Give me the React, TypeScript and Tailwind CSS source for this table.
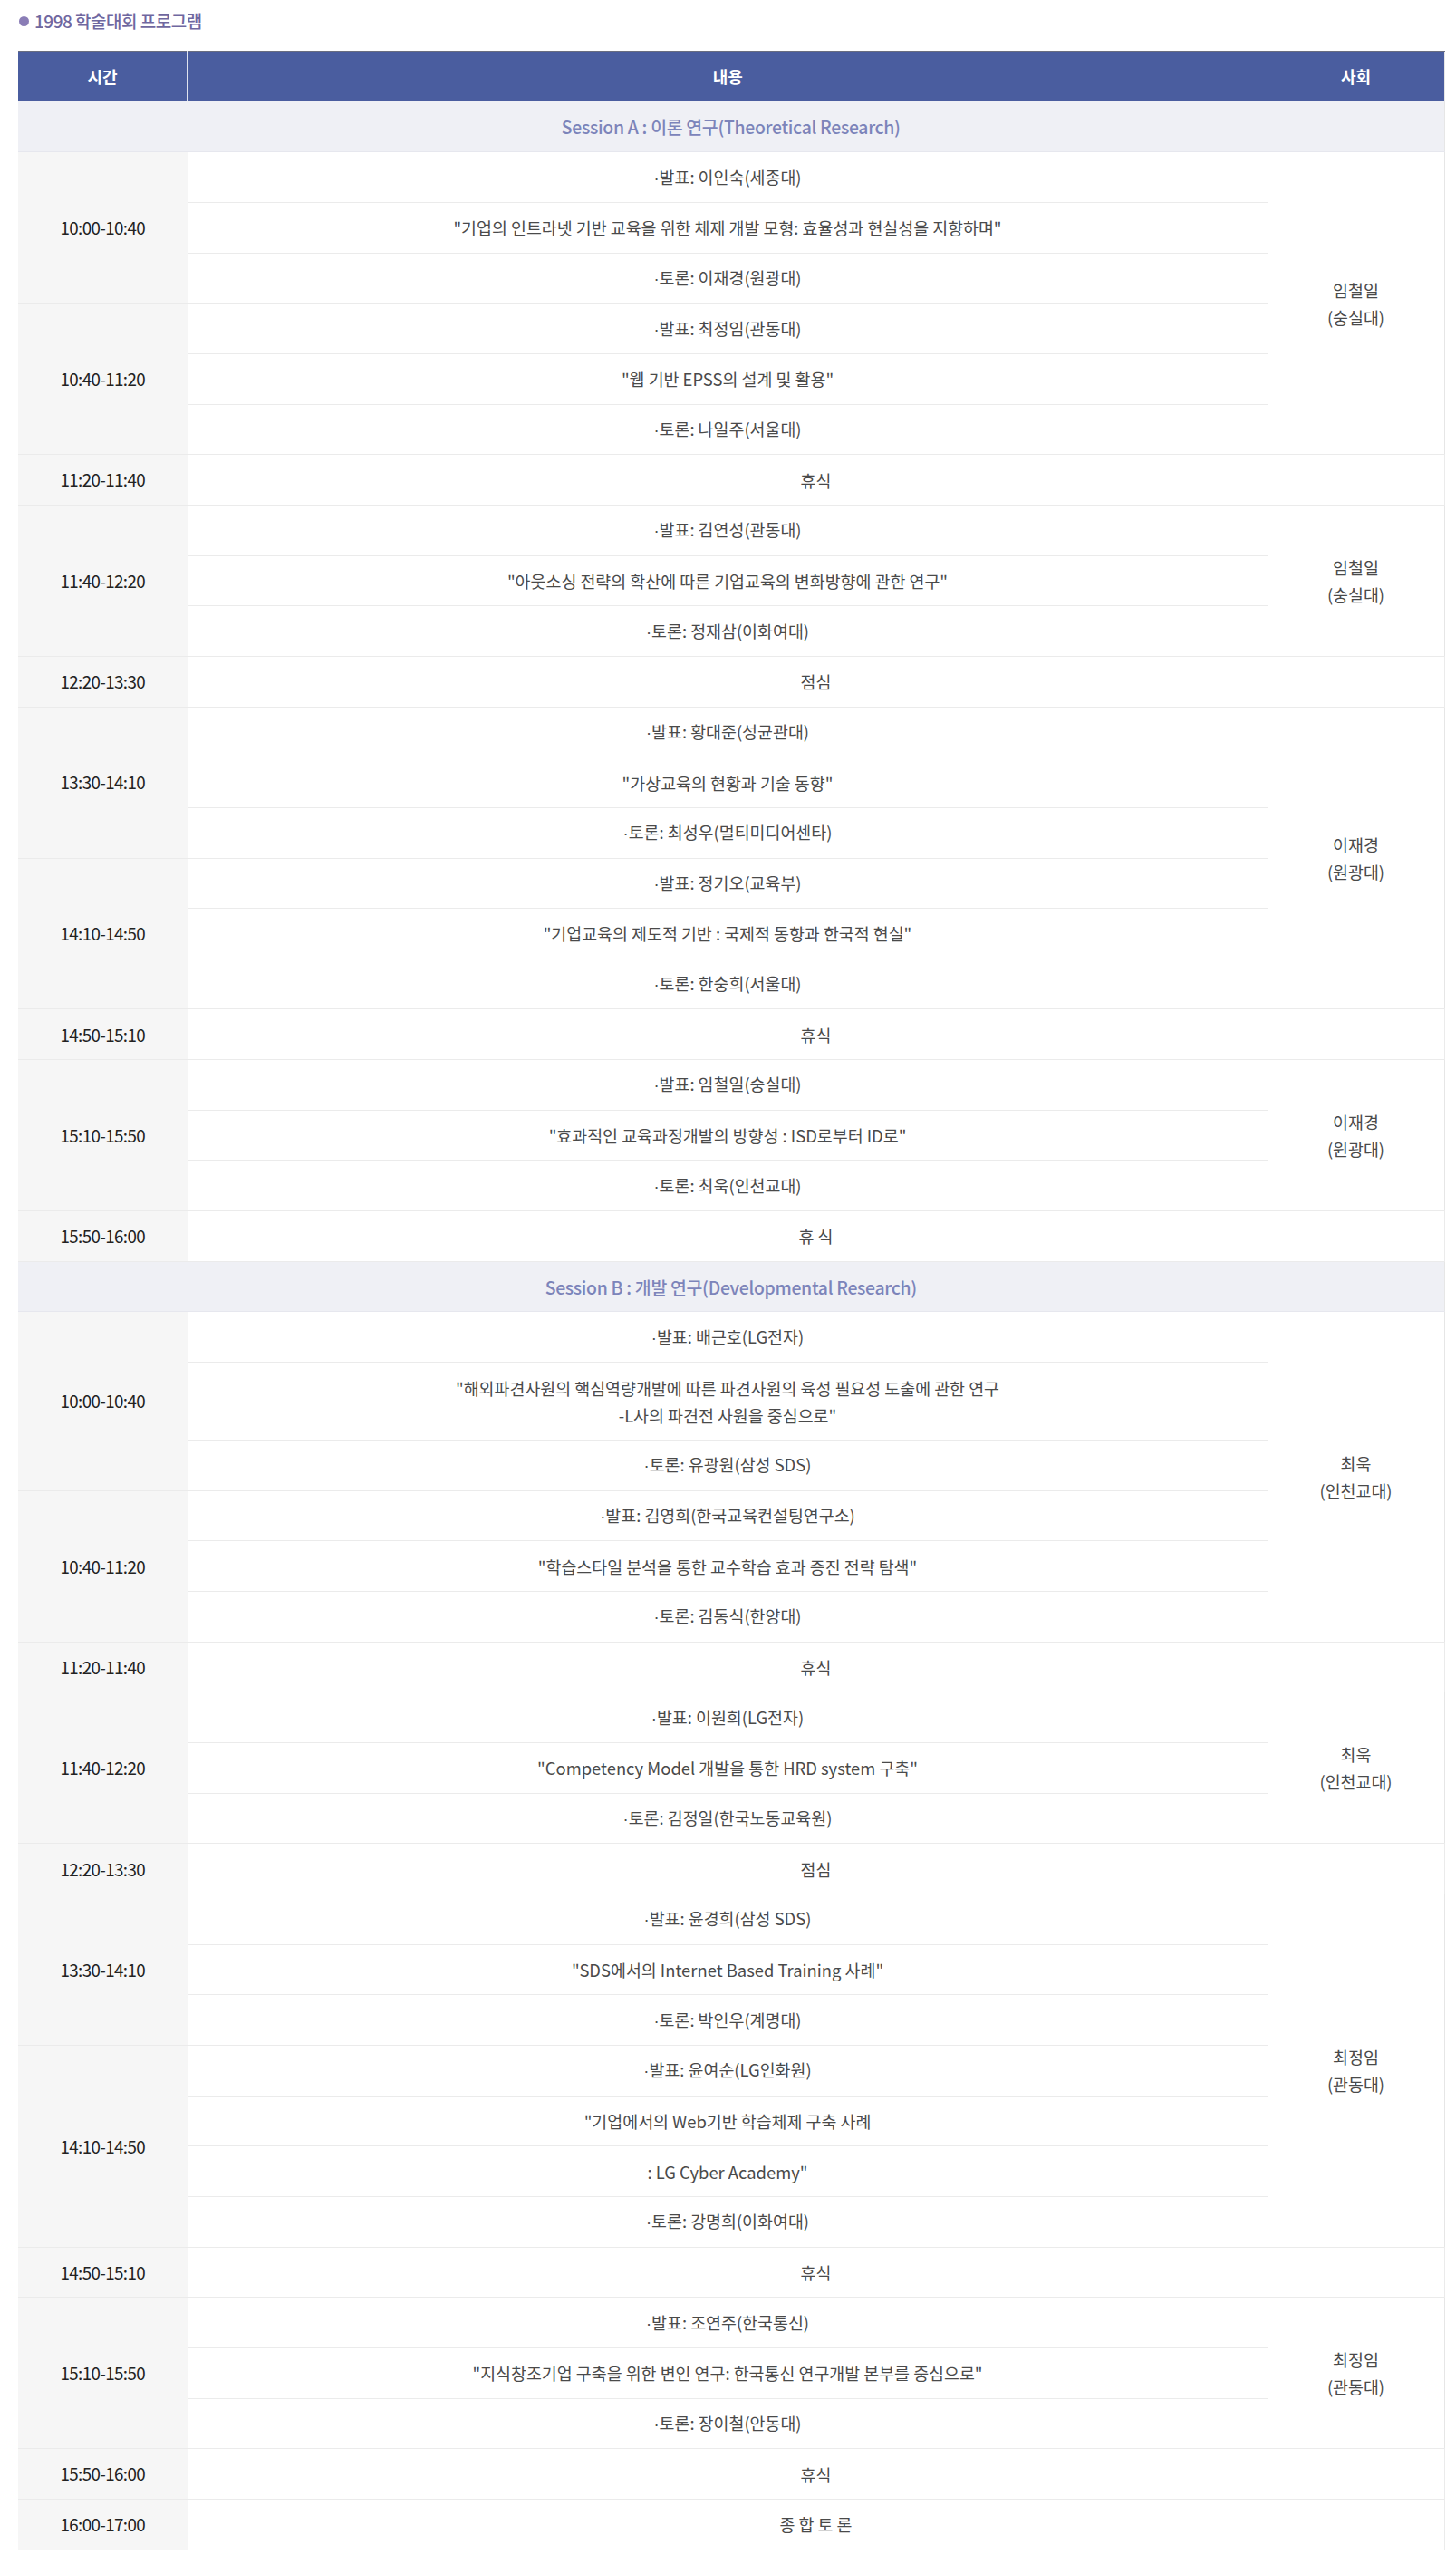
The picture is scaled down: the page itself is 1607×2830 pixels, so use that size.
import React from "react";

type Block =
  | { time: string; lines: string[][]; chair?: [string, string, number] }
  | { time: string; brk: string };

type Session = { title: string; blocks: Block[] };

const sessions: Session[] = [
  {
    title: "Session A : 이론 연구(Theoretical Research)",
    blocks: [
      {
        time: "10:00-10:40",
        lines: [["·발표: 이인숙(세종대)"], ["\"기업의 인트라넷 기반 교육을 위한 체제 개발 모형: 효율성과 현실성을 지향하며\""], ["·토론: 이재경(원광대)"]],
        chair: ["임철일", "(숭실대)", 6],
      },
      {
        time: "10:40-11:20",
        lines: [["·발표: 최정임(관동대)"], ["\"웹 기반 EPSS의 설계 및 활용\""], ["·토론: 나일주(서울대)"]],
      },
      { time: "11:20-11:40", brk: "휴식" },
      {
        time: "11:40-12:20",
        lines: [["·발표: 김연성(관동대)"], ["\"아웃소싱 전략의 확산에 따른 기업교육의 변화방향에 관한 연구\""], ["·토론: 정재삼(이화여대)"]],
        chair: ["임철일", "(숭실대)", 3],
      },
      { time: "12:20-13:30", brk: "점심" },
      {
        time: "13:30-14:10",
        lines: [["·발표: 황대준(성균관대)"], ["\"가상교육의 현황과 기술 동향\""], ["·토론: 최성우(멀티미디어센타)"]],
        chair: ["이재경", "(원광대)", 6],
      },
      {
        time: "14:10-14:50",
        lines: [["·발표: 정기오(교육부)"], ["\"기업교육의 제도적 기반 : 국제적 동향과 한국적 현실\""], ["·토론: 한숭희(서울대)"]],
      },
      { time: "14:50-15:10", brk: "휴식" },
      {
        time: "15:10-15:50",
        lines: [["·발표: 임철일(숭실대)"], ["\"효과적인 교육과정개발의 방향성 : ISD로부터 ID로\""], ["·토론: 최욱(인천교대)"]],
        chair: ["이재경", "(원광대)", 3],
      },
      { time: "15:50-16:00", brk: "휴 식" },
    ],
  },
  {
    title: "Session B : 개발 연구(Developmental Research)",
    blocks: [
      {
        time: "10:00-10:40",
        lines: [
          ["·발표: 배근호(LG전자)"],
          ["\"해외파견사원의 핵심역량개발에 따른 파견사원의 육성 필요성 도출에 관한 연구", "-L사의 파견전 사원을 중심으로\""],
          ["·토론: 유광원(삼성 SDS)"],
        ],
        chair: ["최욱", "(인천교대)", 6],
      },
      {
        time: "10:40-11:20",
        lines: [["·발표: 김영희(한국교육컨설팅연구소)"], ["\"학습스타일 분석을 통한 교수학습 효과 증진 전략 탐색\""], ["·토론: 김동식(한양대)"]],
      },
      { time: "11:20-11:40", brk: "휴식" },
      {
        time: "11:40-12:20",
        lines: [["·발표: 이원희(LG전자)"], ["\"Competency Model 개발을 통한 HRD system 구축\""], ["·토론: 김정일(한국노동교육원)"]],
        chair: ["최욱", "(인천교대)", 3],
      },
      { time: "12:20-13:30", brk: "점심" },
      {
        time: "13:30-14:10",
        lines: [["·발표: 윤경희(삼성 SDS)"], ["\"SDS에서의 Internet Based Training 사례\""], ["·토론: 박인우(계명대)"]],
        chair: ["최정임", "(관동대)", 7],
      },
      {
        time: "14:10-14:50",
        lines: [["·발표: 윤여순(LG인화원)"], ["\"기업에서의 Web기반 학습체제 구축 사례"], [": LG Cyber Academy\""], ["·토론: 강명희(이화여대)"]],
      },
      { time: "14:50-15:10", brk: "휴식" },
      {
        time: "15:10-15:50",
        lines: [["·발표: 조연주(한국통신)"], ["\"지식창조기업 구축을 위한 변인 연구: 한국통신 연구개발 본부를 중심으로\""], ["·토론: 장이철(안동대)"]],
        chair: ["최정임", "(관동대)", 3],
      },
      { time: "15:50-16:00", brk: "휴식" },
      { time: "16:00-17:00", brk: "종 합 토 론" },
    ],
  },
];

const timeCls =
  "bg-[#f6f6f6] border-r border-b border-[#ebebeb] text-center align-middle text-[#222] text-[18.8px] tracking-[-0.6px]";
const contentCls =
  "border-b border-r border-[#ebebeb] text-center align-middle text-[#4a4a4a] text-[18.4px] leading-[30px]";

function Line({ t }: { t: string }) {
  if (t.startsWith("·")) {
    return (
      <div>
        <span style={{ fontFamily: '"Liberation Sans", sans-serif' }}>·</span>
        {t.slice(1)}
      </div>
    );
  }
  return <div>{t}</div>;
}

export default function App() {
  const rows: React.ReactNode[] = [];
  sessions.forEach((s, si) => {
    rows.push(
      <tr key={`s${si}`} className="h-[55.66px]">
        <td
          colSpan={3}
          className="bg-[#eff0f5] border-b border-[#e6e7ee] text-center align-middle text-[19.4px] font-medium text-[#7c84ba] tracking-[-0.3px]"
        >
          {s.title}
        </td>
      </tr>
    );
    s.blocks.forEach((b, bi) => {
      if ("brk" in b) {
        rows.push(
          <tr key={`s${si}b${bi}`} className="h-[55.66px]">
            <td className={timeCls}>{b.time}</td>
            <td colSpan={2} className={contentCls}>
              {b.brk}
            </td>
          </tr>
        );
      } else {
        b.lines.forEach((ln, li) => {
          const tall = ln.length > 1;
          rows.push(
            <tr key={`s${si}b${bi}l${li}`} className={tall ? "h-[86px]" : "h-[55.66px]"}>
              {li === 0 && (
                <td rowSpan={b.lines.length} className={timeCls}>
                  {b.time}
                </td>
              )}
              <td className={contentCls}>
                {ln.map((t, ti) => (
                  <Line key={ti} t={t} />
                ))}
              </td>
              {li === 0 && b.chair && (
                <td
                  rowSpan={b.chair[2]}
                  className="border-b border-[#ebebeb] text-center align-middle text-[#4a4a4a] text-[18.4px] leading-[30px]"
                >
                  <div>{b.chair[0]}</div>
                  <div>{b.chair[1]}</div>
                </td>
              )}
            </tr>
          );
        });
      }
    });
  });

  return (
    <div
      className="bg-white w-[1607px] min-h-[2830px] pl-[20px] pr-[13px] pt-[10px]"
      style={{ fontFamily: '"Noto Sans CJK KR", "Noto Sans", sans-serif' }}
    >
      <div className="flex items-center gap-[6px] h-[26px]">
        <span className="ml-[1px] w-[11px] h-[11px] rounded-full bg-[#8a7db6]" />
        <span className="text-[19px] font-medium text-[#6f679f] tracking-[-0.5px]">1998 학술대회 프로그램</span>
      </div>
      <table className="mt-[20px] w-[1574px] table-fixed border-collapse border-r border-[#e6e6e6]">
        <colgroup>
          <col className="w-[187px]" />
          <col className="w-[1192px]" />
          <col className="w-[195px]" />
        </colgroup>
        <thead>
          <tr className="h-[55.66px] bg-[#4a5d9f] text-white text-[18px] font-bold border-t border-[#6a6e80]">
            <th className="border-r-2 border-[#dfe3ef] align-middle">시간</th>
            <th className="border-r border-[#a9b2d4] align-middle">내용</th>
            <th className="align-middle">사회</th>
          </tr>
        </thead>
        <tbody>{rows}</tbody>
      </table>
    </div>
  );
}
